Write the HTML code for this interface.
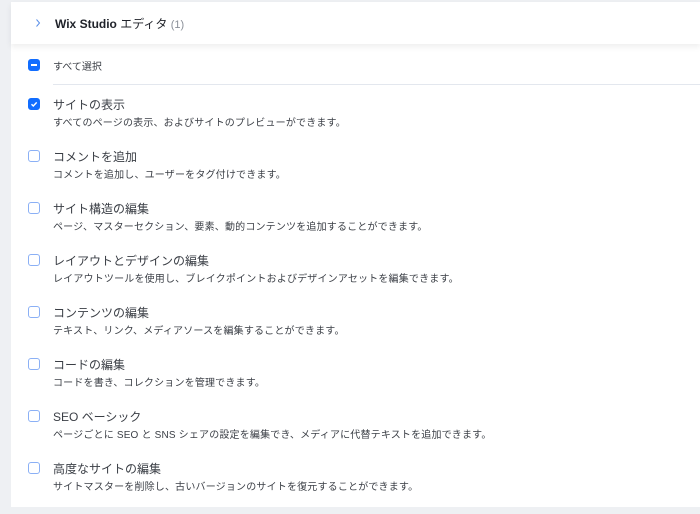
<!DOCTYPE html><html><head><meta charset="utf-8"><style>
body{margin:0;width:700px;height:514px;background:#eef0f3;font-family:"Liberation Sans","Noto Sans CJK JP",sans-serif;position:relative;overflow:hidden}
.panel{position:absolute;left:11px;top:2px;width:689px;height:505px;background:#fff}
.hdr{position:absolute;left:11px;top:2px;width:689px;height:42px;background:#fff;box-shadow:0 3px 6px rgba(0,0,0,.07)}
.t{position:absolute;white-space:nowrap}
.cb{position:absolute;left:28px;width:10px;height:10px;border:1px solid #8bb0f5;border-radius:3px;background:#fff}
.cbf{background:#116dff;border-color:#116dff}
.ti{font-size:12px;color:#3a3e45;left:53px}
.de{font-size:10px;color:#3b3f46;left:53px;letter-spacing:0.18px}
</style></head><body>
<div class="panel"></div><div class="hdr"></div>
<svg width="8" height="10" style="position:absolute;left:34px;top:18px"><path d="M2.5 1.5l3 3.5-3 3.5" stroke="#5a8fe8" stroke-width="1" fill="none"/></svg>
<div class="t" style="left:55px;top:15px;font-size:12px;color:#20232a;font-weight:bold">Wix Studio <span style="font-weight:normal">エディタ</span> <span style="color:#8a8f98;font-weight:normal;font-size:11px">(1)</span></div>
<div class="cb cbf" style="top:59px"><div style="position:absolute;left:2px;top:4px;width:6px;height:2px;background:#fff"></div></div>
<div class="t" style="left:53px;top:58px;font-size:10px;color:#3b3f46">すべて選択</div>
<div style="position:absolute;left:53px;top:84px;width:647px;height:1px;background:#e3e7ee"></div>
<div class="cb cbf" style="top:98px"><svg width="10" height="10" style="position:absolute;left:0;top:0"><path d="M2.5 5.2l1.8 1.8 3.4-3.6" stroke="#fff" stroke-width="1.4" fill="none"/></svg></div>
<div class="t ti" style="top:96px">サイトの表示</div><div class="t de" style="top:114px">すべてのページの表示、およびサイトのプレビューができます。</div>
<div class="cb" style="top:150px"></div>
<div class="t ti" style="top:148px">コメントを追加</div><div class="t de" style="top:166px">コメントを追加し、ユーザーをタグ付けできます。</div>
<div class="cb" style="top:202px"></div>
<div class="t ti" style="top:200px">サイト構造の編集</div><div class="t de" style="top:218px">ページ、マスターセクション、要素、動的コンテンツを追加することができます。</div>
<div class="cb" style="top:254px"></div>
<div class="t ti" style="top:252px">レイアウトとデザインの編集</div><div class="t de" style="top:270px">レイアウトツールを使用し、ブレイクポイントおよびデザインアセットを編集できます。</div>
<div class="cb" style="top:306px"></div>
<div class="t ti" style="top:304px">コンテンツの編集</div><div class="t de" style="top:322px">テキスト、リンク、メディアソースを編集することができます。</div>
<div class="cb" style="top:358px"></div>
<div class="t ti" style="top:356px">コードの編集</div><div class="t de" style="top:374px">コードを書き、コレクションを管理できます。</div>
<div class="cb" style="top:410px"></div>
<div class="t ti" style="top:408px">SEO ベーシック</div><div class="t de" style="top:426px">ページごとに SEO と SNS シェアの設定を編集でき、メディアに代替テキストを追加できます。</div>
<div class="cb" style="top:462px"></div>
<div class="t ti" style="top:460px">高度なサイトの編集</div><div class="t de" style="top:478px">サイトマスターを削除し、古いバージョンのサイトを復元することができます。</div>
</body></html>
